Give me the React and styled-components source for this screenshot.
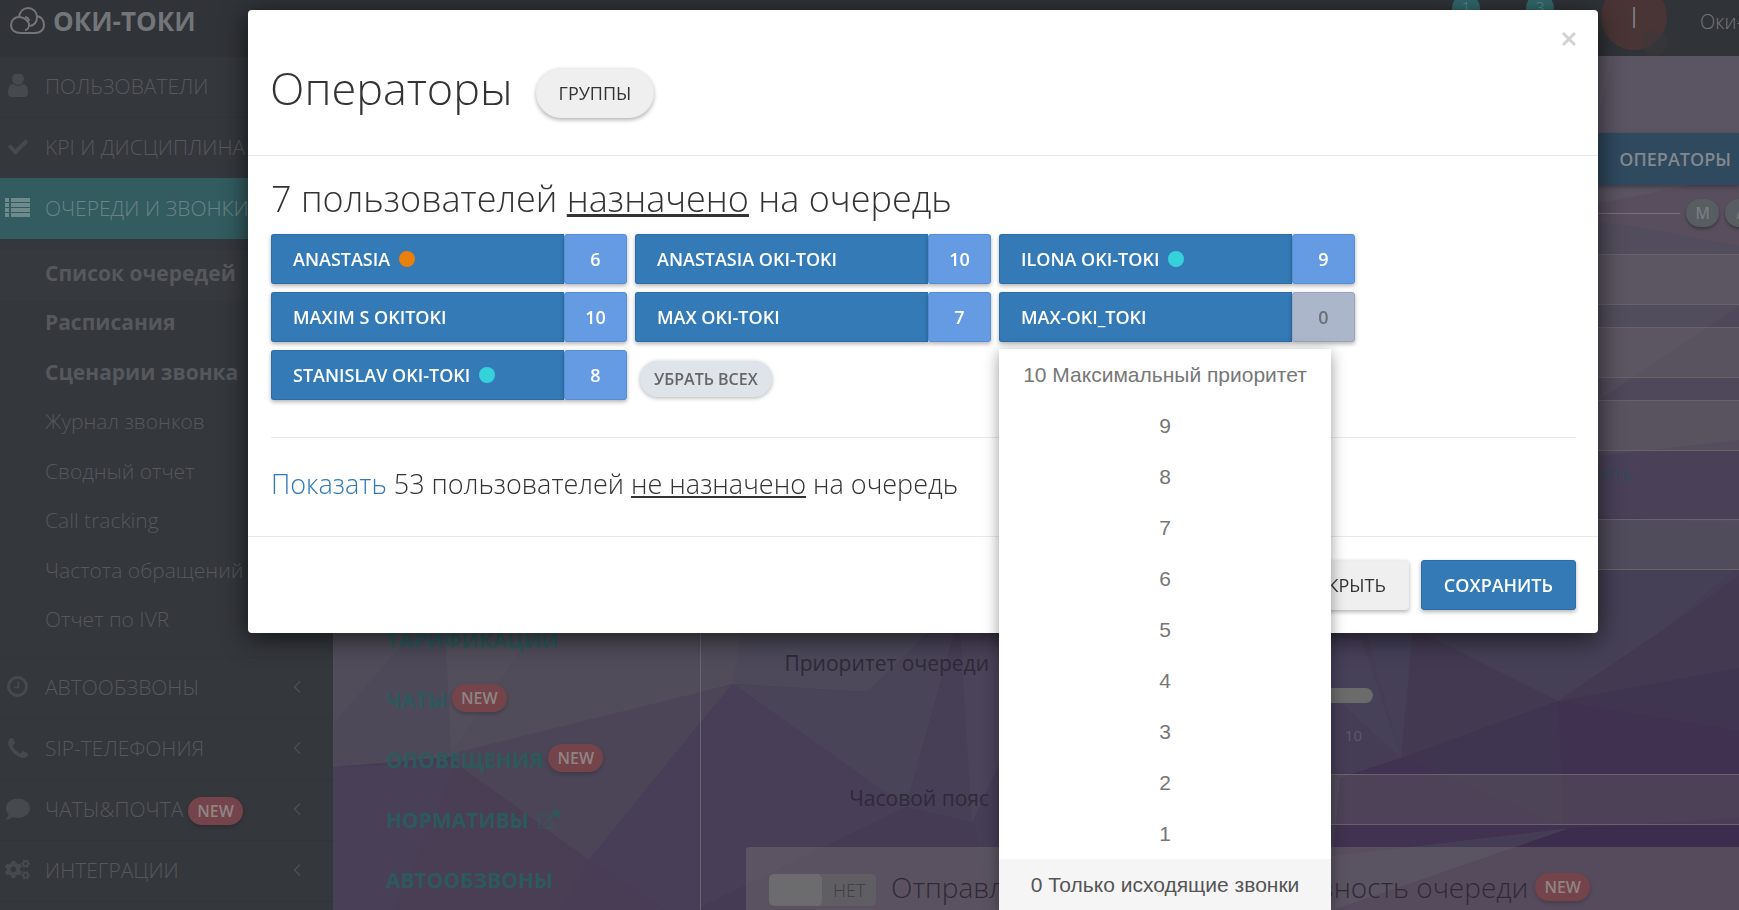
import React from 'react';
import styled, { createGlobalStyle, css } from 'styled-components';
import { FaCheck, FaCogs, FaComment } from 'react-icons/fa';
import { FiChevronLeft } from 'react-icons/fi';

const Colors = {
  bar: '#303338',
  sidebar: '#34373c',
  line: '#313439',
  muted: '#55585c',
  active: '#325c60',
  teal: '#2c5a5c',
  badge: '#74444a',
  primary: '#337ab7',
  priority: '#649be2',
};

const GlobalStyle = createGlobalStyle`
  * {
    box-sizing: border-box;
  }
  html, body, #root {
    height: 100%;
  }
  body {
    margin: 0;
    overflow: hidden;
    background: #483f54;
    font-family: 'Open Sans', 'Noto Sans', sans-serif;
    font-weight: 300;
  }
  button, select, input {
    font-family: inherit;
  }
  h1, h2, h3, p, ul {
    margin: 0;
    padding: 0;
    font-weight: 300;
  }
  ul {
    list-style: none;
  }
  a {
    text-decoration: none;
  }
`;

const Page = styled.div`
  height: 100vh;
  display: flex;
  flex-direction: column;
  overflow: hidden;
`;

/* ---------- top bar ---------- */

const TopBar = styled.header`
  flex: none;
  display: flex;
  align-items: center;
  height: 56px;
  padding-left: 10px;
  overflow: hidden;
  background: ${Colors.bar};
`;

const Logo = styled.a`
  display: flex;
  align-items: center;
  gap: 7px;
  height: 42px;
  margin: 0 auto 14px 0;
  color: #737578;
  font-size: 26px;
  font-weight: 700;
`;

const CounterList = styled.div`
  display: flex;
  gap: 46px;
  margin-bottom: 40px;
`;

const Counter = styled.span`
  width: 28px;
  height: 28px;
  border-radius: 50%;
  background: #32696c;
  color: #6f8a8c;
  font-size: 16px;
  line-height: 28px;
  text-align: center;
`;

const Avatar = styled.span`
  position: relative;
  flex: none;
  width: 66px;
  height: 66px;
  margin: 0 33px 22px 47px;
  border-radius: 50%;
  background: #4a3536;
  color: #858587;
  font-size: 30px;
  line-height: 66px;
  text-align: center;
  &::after {
    content: '';
    position: absolute;
    right: 0;
    bottom: -6px;
    width: 26px;
    height: 26px;
    border-radius: 50%;
    background: rgba(60, 56, 60, 0.5);
  }
`;

const Account = styled.span`
  flex: none;
  width: 39px;
  margin-bottom: 14px;
  overflow: hidden;
  white-space: nowrap;
  color: #737578;
  font-size: 20px;
`;

/* ---------- sidebar ---------- */

const Body = styled.div`
  flex: 1;
  min-height: 0;
  display: flex;
`;

const Sidebar = styled.nav`
  flex: none;
  width: 333px;
  overflow: hidden;
  background: ${Colors.sidebar};
`;

const MenuItem = styled.a`
  display: flex;
  align-items: center;
  height: 61px;
  padding: 0 26px 3px 5px;
  border-top: 1px solid ${(props) => (props.$active ? Colors.active : Colors.line)};
  color: ${(props) => (props.$active ? '#6b8385' : Colors.muted)};
  background: ${(props) => (props.$active ? Colors.active : 'transparent')};
  font-size: 21px;
  white-space: nowrap;
`;

const MenuIcon = styled.span`
  display: flex;
  justify-content: center;
  width: 25px;
  margin-right: 15px;
  color: ${(props) => (props.$active ? '#6f8a8b' : '#46494d')};
`;

const Arrow = styled(FiChevronLeft)`
  margin-left: auto;
  color: #4b4e52;
`;

const SubMenu = styled.ul`
  display: grid;
  grid-auto-rows: 1fr;
  height: 418px;
  padding: 11px 0;
`;

const SubMenuItem = styled.li`
  display: flex;
  align-items: center;
  padding: 0 0 4px 45px;
  background: ${(props) => (props.$current ? '#36393e' : 'transparent')};
  a {
    color: ${Colors.muted};
    font-size: 21px;
    font-weight: ${(props) => (props.$strong ? 700 : 300)};
    white-space: nowrap;
  }
`;

const NewBadge = styled.span`
  flex: none;
  height: 28px;
  padding: 0 9px;
  margin: ${(props) => props.$margin || '0 0 0 6px'};
  border-radius: 14px;
  background: ${Colors.badge};
  color: #8f8483;
  font-size: 16px;
  font-weight: 600;
  line-height: 28px;
  box-shadow: 0 2px 4px rgba(0, 0, 0, 0.2);
`;

/* ---------- queue settings ---------- */

const Content = styled.main`
  position: relative;
  flex: 1;
  min-width: 0;
  display: flex;
  overflow: hidden;
`;

const Backdrop = styled.svg`
  position: absolute;
  inset: 0;
  width: 100%;
  height: 100%;
`;

const Sections = styled.ul`
  position: relative;
  flex: none;
  width: 368px;
  padding: 554px 0 0 53px;
  border-right: 1px solid #6a6570;
`;

const SectionItem = styled.li`
  display: flex;
  align-items: center;
  gap: 8px;
  height: 60px;
  color: ${Colors.teal};
  a {
    color: inherit;
    font-size: 21px;
    font-weight: 700;
  }
`;

const Settings = styled.div`
  position: relative;
  flex: 1;
  min-width: 0;
  padding-left: 45px;
`;

const Actions = styled.div`
  display: flex;
  justify-content: flex-end;
  padding-top: 77px;
`;

const OperatorsButton = styled.button`
  flex: none;
  height: 52px;
  padding: 0 8px 0 22px;
  border: 0;
  border-radius: 3px 0 0 3px;
  background: #2f495f;
  color: #82888e;
  font-size: 18px;
  font-weight: 600;
  box-shadow: 0 2px 4px rgba(0, 0, 0, 0.3);
`;

const Members = styled.div`
  display: flex;
  align-items: center;
  gap: 6px;
  height: 56px;
  margin-right: -19px;
  &::before {
    content: '';
    flex: 1;
    border-top: 1px solid #77727c;
  }
`;

const Member = styled.span`
  width: 33px;
  height: 28px;
  border-radius: 14px;
  background: #585d62;
  color: #777a7e;
  font-size: 16px;
  font-weight: 600;
  line-height: 28px;
  text-align: center;
  box-shadow: 0 2px 3px rgba(0, 0, 0, 0.3);
`;

const Form = styled.form`
  padding-top: 13px;
`;

const Field = styled.div`
  display: grid;
  grid-template-columns: 243px 1fr;
  column-gap: 20px;
  align-items: center;
  margin-bottom: 22px;
  > label {
    padding-bottom: 3px;
    color: #2e2a36;
    font-size: 21px;
    font-weight: 400;
    text-align: right;
    white-space: nowrap;
  }
`;

const control = css`
  width: 100%;
  height: 51px;
  border: 1px solid #67626b;
  border-right: 0;
  border-radius: 0;
  background: rgba(122, 118, 114, 0.24);
`;

const TextBox = styled.input`
  ${control};
`;

const Select = styled.select`
  ${control};
  appearance: none;
`;

const LinkRow = styled.div`
  height: 46px;
  padding-right: 106px;
  line-height: 48px;
  margin: -22px 0 22px;
  text-align: right;
  a {
    color: #34495a;
    font-size: 17px;
    font-weight: 400;
  }
`;

const SliderBox = styled.div`
  width: 364px;
  height: 44px;
  margin: 96px 0 0;
  color: #5f5968;
  font-size: 15px;
  font-weight: 400;
  text-align: right;
  input {
    display: block;
    appearance: none;
    width: 100%;
    height: 15px;
    margin: 0;
    border-radius: 8px;
    background: #6b6b6b;
  }
  span {
    display: block;
    padding: 22px 11px 0 0;
    line-height: 20px;
  }
`;

const PriorityField = styled(Field)`
  margin-bottom: 42px;
  align-items: start;
  > label {
    padding-top: 57px;
  }
`;

const Card = styled.section`
  display: flex;
  align-items: center;
  height: 86px;
  padding-left: 23px;
  border-radius: 3px 0 0 0;
  background: rgba(112, 106, 110, 0.5);
`;

const Toggle = styled.label`
  display: flex;
  flex: none;
  width: 107px;
  height: 32px;
  border-radius: 5px;
  overflow: hidden;
  background: #5f5e63;
  color: #3f3c46;
  font-size: 18px;
  line-height: 32px;
  input {
    appearance: none;
    width: 53px;
    height: 32px;
    margin: 0 11px 0 0;
    border-radius: 5px;
    background: #6c6c6e;
  }
`;

const CardTitle = styled.h3`
  margin-left: 15px;
  padding-bottom: 7px;
  color: #2e2a35;
  font-size: 28px;
  line-height: 38px;
  white-space: nowrap;
`;

/* ---------- modal ---------- */

const Overlay = styled.div`
  position: fixed;
  inset: 0;
  padding: 10px 141px 0 248px;
`;

const Dialog = styled.div`
  border-radius: 4px;
  background: #fff;
  color: #333;
  box-shadow: 0 5px 26px rgba(0, 0, 0, 0.65);
`;

const DialogHeader = styled.div`
  position: relative;
  display: flex;
  align-items: center;
  gap: 23px;
  height: 146px;
  padding: 20px 22px 0;
  border-bottom: 1px solid #e9e9e9;
  h1 {
    padding-bottom: 9px;
    font-size: 45px;
    line-height: 60px;
  }
`;

const CloseButton = styled.button`
  position: absolute;
  top: 18px;
  right: 18px;
  width: 22px;
  height: 22px;
  padding: 0;
  border: 0;
  background: none;
  color: #d2d2d2;
  svg {
    display: block;
    margin: 0 auto;
  }
`;

const Button = styled.button`
  height: 50px;
  padding: 0 22px;
  border: 1px solid ${(props) => (props.$primary ? '#2e6da4' : '#ededed')};
  border-radius: ${(props) => (props.$round ? 25 : 3)}px;
  background: ${(props) => (props.$primary ? Colors.primary : '#efefef')};
  color: ${(props) => (props.$primary ? '#fff' : '#333')};
  font-size: 18px;
  font-weight: ${(props) => (props.$primary ? 600 : 500)};
  box-shadow: 0 2px 4px rgba(0, 0, 0, 0.3);
`;

const DialogBody = styled.div`
  padding: 18px 22px 0 23px;
`;

const AssignedTitle = styled.h2`
  font-size: 36px;
  line-height: 50px;
  margin-bottom: 10px;
`;

const OperatorGrid = styled.div`
  display: grid;
  grid-template-columns: repeat(3, 356px);
  gap: 8px;
`;

const Operator = styled.div`
  position: relative;
  display: flex;
  height: 50px;
`;

const OperatorName = styled.button`
  flex: 1;
  display: flex;
  align-items: center;
  gap: 9px;
  padding: 0 21px;
  border: 1px solid #2e6da4;
  border-right: 0;
  border-radius: 3px 0 0 3px;
  background: ${Colors.primary};
  color: #fff;
  font-size: 18px;
  font-weight: 600;
  box-shadow: 0 2px 4px rgba(0, 0, 0, 0.3);
`;

const Status = styled.i`
  width: 16px;
  height: 16px;
  border-radius: 50%;
  background: ${(props) => props.$color};
`;

const Priority = styled.button`
  width: 63px;
  padding: 0;
  border: 1px solid ${(props) => (props.$open ? '#98a4bb' : '#558dd6')};
  border-radius: 3px;
  background: ${(props) => (props.$open ? '#abb6ca' : Colors.priority)};
  color: ${(props) => (props.$open ? '#6b7079' : '#fff')};
  font-size: 18px;
  font-weight: 600;
  box-shadow: 0 2px 4px rgba(0, 0, 0, 0.3);
`;

const PriorityMenu = styled.ul`
  position: absolute;
  z-index: 10;
  top: 57px;
  left: 0;
  width: 332px;
  background: #fff;
  box-shadow: 0 4px 14px rgba(0, 0, 0, 0.4);
`;

const PriorityOption = styled.li`
  color: ${(props) => (props.$selected ? '#555' : '#777')};
  background: ${(props) => (props.$selected ? '#f5f5f5' : '#fff')};
  font-family: 'Liberation Sans', Arial, sans-serif;
  font-size: 21px;
  font-weight: 400;
  line-height: 51px;
  text-align: center;
`;

const RemoveAll = styled.button`
  justify-self: start;
  height: 36px;
  margin: 11px 0 0 5px;
  padding: 0 14px;
  border: 0;
  border-radius: 18px;
  background: #dfe3ea;
  color: #666;
  font-size: 16px;
  font-weight: 600;
  box-shadow: 0 1px 4px rgba(0, 0, 0, 0.3);
`;

const FreeUsers = styled.p`
  margin-top: 37px;
  padding: 26px 0 32px;
  border-top: 1px solid #e9e9e9;
  font-size: 27px;
  line-height: 40px;
  a {
    color: ${Colors.primary};
  }
`;

const DialogFooter = styled.div`
  display: flex;
  justify-content: flex-end;
  gap: 12px;
  padding: 23px 22px;
  border-top: 1px solid #e9e9e9;
`;

const CloudIcon = () => (
  <svg width="36" height="28" viewBox="0 0 36 28" fill="none" stroke="currentColor" strokeWidth="2">
    <path d="M11 26 C5 26 1 23 1 18 C1 13 5 10 9 10 C14 10 19 14 19 18 C19 21 17 23 15 23" />
    <path d="M9 10 C10 4 14 1 18 1 C23 1 27 5 27 10 C27 15 24 18 20 19" />
    <path d="M15 10 C17 10 19 12 19 14" />
    <path d="M27 9 C31 10 34 13 34 18 C34 23 30 26 25 26 H11" />
  </svg>
);

const UserIcon = () => (
  <svg width="20" height="23" viewBox="0 200 1280 1464" fill="currentColor">
    <path d="M1280 1399q0 109-62.500 187t-150.500 78h-854q-88 0-150.500-78t-62.500-187q0-85 8.500-160.500t31.500-152 58.500-131 94-89 134.500-34.500q131 128 313 128t313-128q76 0 134.500 34.500t94 89 58.500 131 31.500 152 8.500 160.500zm-256-887q0 159-112.500 271.500t-271.500 112.500-271.500-112.500-112.500-271.500 112.500-271.500 271.500-112.500 271.500 112.500 112.500 271.500z" />
  </svg>
);

const ListIcon = () => (
  <svg width="25" height="20" viewBox="0 0 25 20" fill="currentColor">
    {[0, 5, 10, 15].map((y) => (
      <path key={y} d={`M0 ${y}h4v4h-4zM6 ${y}h19v4h-19z`} />
    ))}
  </svg>
);

const ClockIcon = () => (
  <svg width="21" height="21" viewBox="0 128 1536 1536" fill="currentColor">
    <path d="M896 544v448q0 14-9 23t-23 9h-320q-14 0-23-9t-9-23v-64q0-14 9-23t23-9h224v-352q0-14 9-23t23-9h64q14 0 23 9t9 23zm416 352q0-148-73-273t-198-198-273-73-273 73-198 198-73 273 73 273 198 198 273 73 273-73 198-198 73-273zm224 0q0 209-103 385.500t-279.500 279.500-385.500 103-385.500-103-279.500-279.500-103-385.500 103-385.500 279.500-279.500 385.500-103 385.500 103 279.500 279.500 103 385.500z" />
  </svg>
);

const PhoneIcon = () => (
  <svg width="20" height="20" viewBox="0 128 1408 1408" fill="currentColor">
    <path d="M1408 1240q0 27-10 70.500t-21 68.500q-21 50-122 106-94 51-186 51-27 0-53-3.500t-57.500-12.500-47-14.500-55.500-20.500-49-18q-98-35-175-83-127-79-264-216t-216-264q-48-77-83-175-3-9-18-49t-20.500-55.500-14.500-47-12.500-57.500-3.500-53q0-92 51-186 56-101 106-122 25-11 68.500-21t70.500-10q14 0 21 3 18 6 53 76 11 19 30 54t35 63.500 31 53.500q3 4 17.500 25t21.500 35.500 7 28.500q0 20-28.500 50t-62 55-62 53-28.500 46q0 9 5 22.500t8.500 20.500 14 24 11.500 19q76 137 174 235t235 174q2 1 19 11.500t24 14 20.500 8.500 22.500 5q18 0 46-28.500t53-62 55-62 50-28.500q14 0 28.500 7t35.500 21.500 25 17.500q25 15 53.500 31t63.500 35 54 30q70 35 76 53 3 7 3 21z" />
  </svg>
);

const ExternalIcon = () => (
  <svg width="24" height="20" viewBox="0 0 24 20" fill="none" stroke="currentColor">
    <path d="M12 4H4Q2 4 2 6V16Q2 18 4 18H14Q16 18 16 16V12" strokeWidth="2" strokeOpacity="0.6" />
    <path d="M9 12L19 3" strokeWidth="2" />
    <path d="M15 1H22V8Z" fill="currentColor" />
  </svg>
);

const CrossIcon = () => (
  <svg width="14" height="22" viewBox="0 0 14 22" stroke="currentColor" strokeWidth="3">
    <path d="M1 5L13 17M13 5L1 17" />
  </svg>
);

// low-poly wallpaper, coordinates start at the corner of the content area
const facets = [
  ['#504c5a', '0,560 660,560 400,628 124,700 0,711'],
  ['#4e4959', '0,668 80,576 112,576 118,697 0,711'],
  ['#524e5b', '118,697 112,560 210,560'],
  ['#494057', '0,711 124,708 62,854 0,854'],
  ['#4a3e55', '124,708 62,854 228,854 256,804'],
  ['#4c4558', '118,698 124,708 256,804 368,666 400,628'],
  ['#493d55', '256,804 228,854 332,854'],
  ['#483e57', '400,628 368,666 256,804 332,854 362,854 573,751'],
  ['#4d495a', '400,628 411,560 620,560 534,636'],
  ['#4a4459', '400,628 534,636 612,560 626,560 573,751'],
  ['#473f56', '626,560 640,767 573,751'],
  ['#4a4359', '626,560 670,560 670,700 639,767'],
  ['#463b55', '573,751 362,854 660,854 640,767'],
  ['#5b5462', '1200,0 1406,0 1406,130 1240,156 1200,156'],
  ['#5e5764', '1200,0 1280,0 1256,100 1240,158 1200,160'],
  ['#584e5e', '1220,156 1406,120 1406,190 1300,176'],
  ['#524d5c', '1200,160 1300,170 1406,190 1406,330 1265,400 1200,400'],
  ['#4f475a', '1406,250 1265,345 1265,420 1406,400'],
  ['#4a4159', '1265,400 1406,384 1406,480 1265,468'],
  ['#454056', '970,577 1097,581 1225,645 1330,574 1406,510 1406,468 1265,460 970,460'],
  ['#433a52', '1330,574 1406,520 1406,612 1225,645'],
  ['#433a52', '1081,560 1097,581 1225,645 1068,702'],
  ['#474059', '970,577 1029,584 1068,702 1005,644'],
  ['#454058', '1029,560 1081,560 1068,702'],
  ['#403550', '1225,645 1406,612 1406,674'],
  ['#403150', '1225,645 1406,674 1406,780 1230,772'],
  ['#403550', '1225,645 1068,702 1007,722 1230,772'],
  ['#403250', '1068,702 1007,722 1000,800 1237,772'],
  ['#3c2c4d', '1237,772 1406,762 1406,854 1000,854'],
];

const Wallpaper = () => (
  <Backdrop viewBox="0 0 1406 854" preserveAspectRatio="none" aria-hidden="true">
    <rect width="1406" height="854" fill="#453d55" />
    {facets.map(([fill, points]) => (
      <polygon key={points} fill={fill} points={points} />
    ))}
  </Backdrop>
);

const subMenu = [
  { name: 'Список очередей', strong: true, current: true },
  { name: 'Расписания', strong: true },
  { name: 'Сценарии звонка', strong: true },
  { name: 'Журнал звонков' },
  { name: 'Сводный отчет' },
  { name: 'Call tracking' },
  { name: 'Частота обращений' },
  { name: 'Отчет по IVR' },
];

const sections = [
  { name: 'ТАРИФИКАЦИИ' },
  { name: 'ЧАТЫ', isNew: true },
  { name: 'ОПОВЕЩЕНИЯ', isNew: true },
  { name: 'НОРМАТИВЫ', external: true },
  { name: 'АВТООБЗВОНЫ' },
];

const operators = [
  { name: 'ANASTASIA', priority: 6, status: '#ea7f0b' },
  { name: 'ANASTASIA OKI-TOKI', priority: 10 },
  { name: 'ILONA OKI-TOKI', priority: 9, status: '#35d2dc' },
  { name: 'MAXIM S OKITOKI', priority: 10 },
  { name: 'MAX OKI-TOKI', priority: 7 },
  { name: 'MAX-OKI_TOKI', priority: 0, open: true },
  { name: 'STANISLAV OKI-TOKI', priority: 8, status: '#35d2dc' },
];

const priorities = [
  '10 Максимальный приоритет',
  '9',
  '8',
  '7',
  '6',
  '5',
  '4',
  '3',
  '2',
  '1',
  '0 Только исходящие звонки',
];

const SidebarItem = ({ icon, name, active, isNew, arrow }) => (
  <MenuItem href="#" $active={active}>
    <MenuIcon $active={active}>{icon}</MenuIcon>
    {name}
    {isNew && <NewBadge $margin="5px 0 0 5px">NEW</NewBadge>}
    {arrow && <Arrow size={20} />}
  </MenuItem>
);

const OperatorsDialog = () => (
  <Overlay>
    <Dialog role="dialog" aria-labelledby="dialog-title">
      <DialogHeader>
        <h1 id="dialog-title">Операторы</h1>
        <Button $round>ГРУППЫ</Button>
        <CloseButton aria-label="Закрыть">
          <CrossIcon />
        </CloseButton>
      </DialogHeader>
      <DialogBody>
        <AssignedTitle>
          7 пользователей <u>назначено</u> на очередь
        </AssignedTitle>
        <OperatorGrid>
          {operators.map(({ name, priority, status, open }) => (
            <Operator key={name}>
              <OperatorName>
                {name}
                {status && <Status $color={status} />}
              </OperatorName>
              <Priority $open={open}>{priority}</Priority>
              {open && (
                <PriorityMenu role="listbox">
                  {priorities.map((text, i) => (
                    <PriorityOption
                      key={text}
                      role="option"
                      $selected={i === priorities.length - 1}
                    >
                      {text}
                    </PriorityOption>
                  ))}
                </PriorityMenu>
              )}
            </Operator>
          ))}
          <RemoveAll>УБРАТЬ ВСЕХ</RemoveAll>
        </OperatorGrid>
        <FreeUsers>
          <a href="#">Показать</a> 53 пользователей <u>не назначено</u> на
          очередь
        </FreeUsers>
      </DialogBody>
      <DialogFooter>
        <Button>ЗАКРЫТЬ</Button>
        <Button $primary>СОХРАНИТЬ</Button>
      </DialogFooter>
    </Dialog>
  </Overlay>
);

const App = () => (
  <>
    <GlobalStyle />
    <Page>
      <TopBar>
        <Logo href="#">
          <CloudIcon />
          ОКИ-ТОКИ
        </Logo>
        <CounterList>
          <Counter>1</Counter>
          <Counter>3</Counter>
        </CounterList>
        <Avatar>I</Avatar>
        <Account>Оки-Токи</Account>
      </TopBar>
      <Body>
        <Sidebar>
          <SidebarItem icon={<UserIcon />} name="ПОЛЬЗОВАТЕЛИ" />
          <SidebarItem icon={<FaCheck size={20} />} name="KPI И ДИСЦИПЛИНА" />
          <SidebarItem icon={<ListIcon />} name="ОЧЕРЕДИ И ЗВОНКИ" active />
          <SubMenu>
            {subMenu.map(({ name, strong, current }) => (
              <SubMenuItem key={name} $strong={strong} $current={current}>
                <a href="#">{name}</a>
              </SubMenuItem>
            ))}
          </SubMenu>
          <SidebarItem icon={<ClockIcon />} name="АВТООБЗВОНЫ" arrow />
          <SidebarItem icon={<PhoneIcon />} name="SIP-ТЕЛЕФОНИЯ" arrow />
          <SidebarItem
            icon={<FaComment size={24} />}
            name="ЧАТЫ&ПОЧТА"
            isNew
            arrow
          />
          <SidebarItem icon={<FaCogs size={25} />} name="ИНТЕГРАЦИИ" arrow />
          <SidebarItem name="" />
        </Sidebar>
        <Content>
          <Wallpaper />
          <Sections>
            {sections.map(({ name, isNew, external }) => (
              <SectionItem key={name}>
                <a href="#">{name}</a>
                {isNew && <NewBadge $margin="0 0 5px -3px">NEW</NewBadge>}
                {external && <ExternalIcon />}
              </SectionItem>
            ))}
          </Sections>
          <Settings>
            <Actions>
              <OperatorsButton>ОПЕРАТОРЫ</OperatorsButton>
            </Actions>
            <Members>
              <Member>M</Member>
              <Member>A</Member>
            </Members>
            <Form>
              {['Название', 'Описание', 'Сценарий'].map((name) => (
                <Field key={name}>
                  <label htmlFor={name}>{name}</label>
                  <TextBox id={name} />
                </Field>
              ))}
              <LinkRow>
                <a href="#">ДОБАВИТЬ</a>
              </LinkRow>
              <Field>
                <label htmlFor="music">Музыка</label>
                <TextBox id="music" />
              </Field>
              <PriorityField>
                <label htmlFor="priority">Приоритет очереди</label>
                <SliderBox>
                  <input id="priority" type="range" min="0" max="10" />
                  <span>10</span>
                </SliderBox>
              </PriorityField>
              <Field>
                <label htmlFor="timezone">Часовой пояс</label>
                <Select id="timezone" />
              </Field>
            </Form>
            <Card>
              <Toggle>
                <input type="checkbox" />
                НЕТ
              </Toggle>
              <CardTitle>Отправлять сообщение как активность очереди</CardTitle>
              <NewBadge $margin="0 0 7px 7px">NEW</NewBadge>
            </Card>
          </Settings>
        </Content>
      </Body>
    </Page>
    <OperatorsDialog />
  </>
);

export default App;
